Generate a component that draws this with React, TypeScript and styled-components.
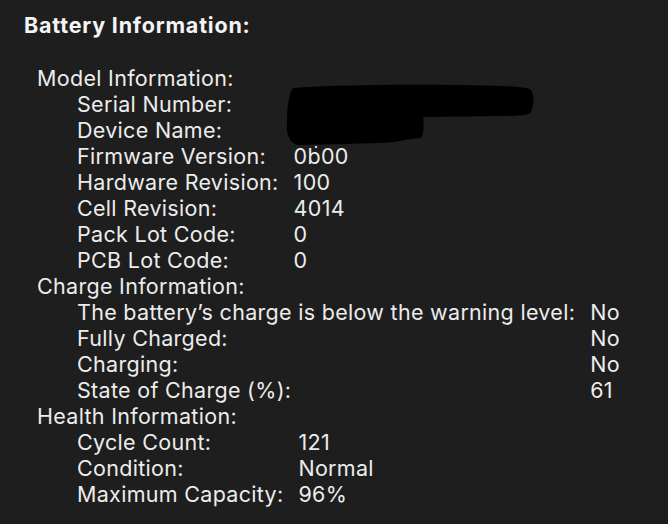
import React from 'react';
import styled, { createGlobalStyle } from 'styled-components';

const GlobalStyle = createGlobalStyle`
  html, body {
    margin: 0;
    padding: 0;
    background: #1e1e1e;
  }
  body {
    font-family: Inter, "Noto Sans", "Liberation Sans", sans-serif;
    color: #ececec;
    -webkit-font-smoothing: antialiased;
  }
`;

const ScPage = styled.div`
  width: 668px;
  height: 524px;
  box-sizing: border-box;
  padding: 12px 0 0 24px;
  background: #1e1e1e;
  overflow: hidden;
`;

const ScTitle = styled.h1`
  margin: 0 0 27px 0;
  font-size: 21.5px;
  font-weight: 700;
  letter-spacing: 0.8px;
  line-height: 26px;
  color: #f4f4f4;
`;

const ScSection = styled.div`
  position: relative;
  padding-left: 13px;
`;

const ScSectionTitle = styled.div`
  font-size: 21.5px;
  letter-spacing: 0.3px;
  line-height: 26px;
`;

const ScGrid = styled.div`
  display: grid;
  grid-template-columns: auto auto;
  justify-content: start;
  column-gap: 15px;
  padding-left: 40px;
  font-size: 21.5px;
  letter-spacing: 0.3px;
  line-height: 26px;
`;

const ScLabel = styled.div`
  white-space: nowrap;
`;

const ScValue = styled.div`
  white-space: nowrap;
`;

const ScRedaction = styled.svg`
  position: absolute;
  left: 261px;
  top: 19px;
  pointer-events: none;
`;

type Row = [string, string];

type SectionProps = {
  title: string,
  rows: Row[],
  children?: React.ReactNode
}

function Section({ title, rows, children }: SectionProps) {
  return (
    <ScSection>
      <ScSectionTitle>{title}</ScSectionTitle>
      <ScGrid>
        {rows.map(([label, value], i) => (
          <React.Fragment key={i}>
            <ScLabel>{label}</ScLabel>
            <ScValue>{value}</ScValue>
          </React.Fragment>
        ))}
      </ScGrid>
      {children}
    </ScSection>
  );
}

const model: Row[] = [
  ['Serial Number:', ''],
  ['Device Name:', ''],
  ['Firmware Version:', '0b00'],
  ['Hardware Revision:', '100'],
  ['Cell Revision:', '4014'],
  ['Pack Lot Code:', '0'],
  ['PCB Lot Code:', '0'],
];

const charge: Row[] = [
  ['The battery\u2019s charge is below the warning level:', 'No'],
  ['Fully Charged:', 'No'],
  ['Charging:', 'No'],
  ['State of Charge (%):', '61'],
];

const health: Row[] = [
  ['Cycle Count:', '121'],
  ['Condition:', 'Normal'],
  ['Maximum Capacity:', '96%'],
];

function App() {
  return (
    <>
      <GlobalStyle />
      <ScPage>
        <ScTitle>{'Battery Information:'}</ScTitle>
        <Section title='Model Information:' rows={model}>
          {/* marker scribble hiding serial / device name */}
          <ScRedaction width='260' height='64' viewBox='0 0 260 64'>
            <path
              d='M8 4 C40 1 120 0 180 1 C215 2 240 2 246 6 C250 12 249 26 244 30 C230 33 200 32 150 33 L138 33 C139 42 139 50 136 54 C120 55 118 57 110 58 C80 60 40 60 12 61 C4 58 1 50 2 40 C2 26 3 12 8 4 Z'
              fill='#000'
            />
            <circle cx='31' cy='63' r='1.2' fill='#ddd' />
          </ScRedaction>
        </Section>
        <Section title='Charge Information:' rows={charge} />
        <Section title='Health Information:' rows={health} />
      </ScPage>
    </>
  );
}

export default App;
